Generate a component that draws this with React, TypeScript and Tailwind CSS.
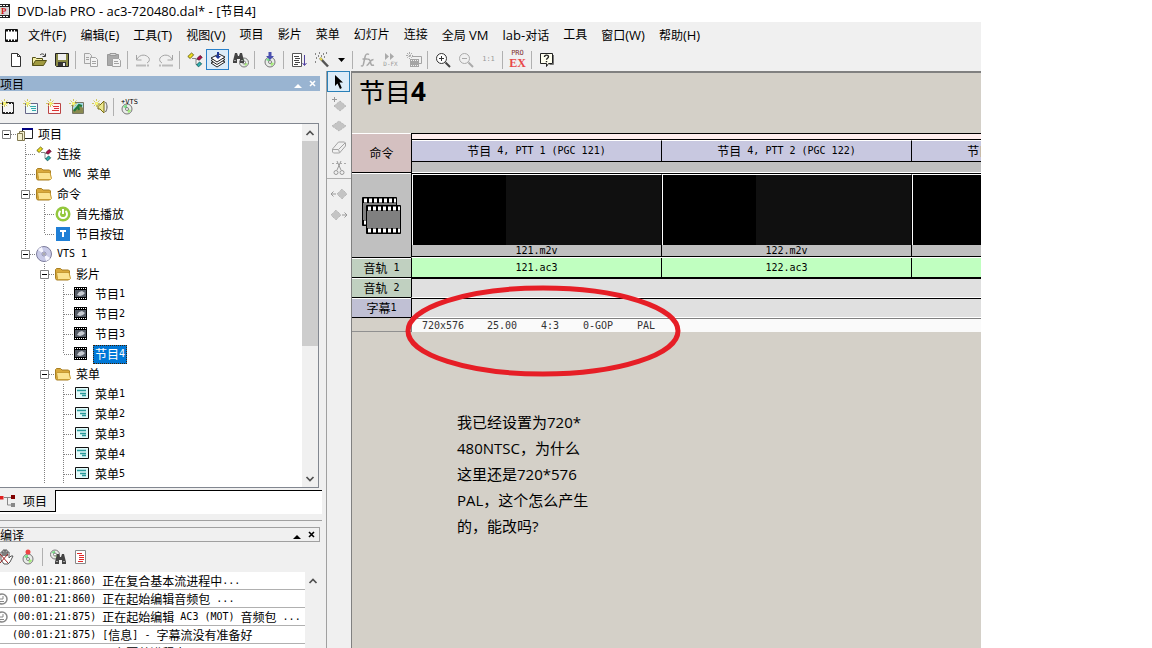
import { Fragment, type ReactNode } from "react";

const splitRuns = (text: string) => text.match(/[\x20-\x7e]+|[^\x20-\x7e]+/g) ?? [];
const isLatin = (run: string) => /^[\x20-\x7e]/.test(run);

/* Half-width latin next to full-width hanzi, like a bitmap song font */
function Song({ text }: { text: string }) {
  return (
    <span className="inline-flex items-center text-xs leading-none whitespace-pre">
      {splitRuns(text).map((run, i) =>
        isLatin(run) ? (
          <span key={i} className="font-['DejaVu_Sans_Mono',monospace] text-[10px] leading-3">
            {run}
          </span>
        ) : (
          <span key={i} className="font-['Noto_Sans_CJK_SC',sans-serif] text-xs leading-3">
            {run}
          </span>
        ),
      )}
    </span>
  );
}

/* Menu and caption text */
function UiText({ text }: { text: string }) {
  return (
    <span className="whitespace-pre">
      {splitRuns(text).map((run, i) => (
        <span key={i} className={isLatin(run) ? "text-[13px] leading-4" : "text-xs leading-4"}>
          {run}
        </span>
      ))}
    </span>
  );
}

function Icon({ children }: { children: ReactNode }) {
  return (
    <svg width="16" height="16" viewBox="0 0 16 16" fill="none" className="shrink-0" aria-hidden="true">
      {children}
    </svg>
  );
}

/* ---------- shared drawing parts ---------- */

function Disc({ cx, cy, r }: { cx: number; cy: number; r: number }) {
  return (
    <g>
      <circle cx={cx} cy={cy} r={r} fill="#e9ece9" stroke="#777" />
      <path d={`M${cx} ${cy}L${cx - r + 1} ${cy - 2}A${r - 1} ${r - 1} 0 0 1 ${cx} ${cy - r + 1}Z`} fill="#7be08a" />
      <path d={`M${cx} ${cy}L${cx + r - 1} ${cy + 1}A${r - 1} ${r - 1} 0 0 1 ${cx + 1} ${cy + r - 1}Z`} fill="#a5ee7a" />
      <circle cx={cx} cy={cy} r="1.5" fill="#fff" stroke="#666" strokeWidth=".8" />
    </g>
  );
}

function Spark() {
  return (
    <g stroke="#cfc860" strokeWidth="1">
      <path d="M4.500 0v9M0 4.500h9M1.500 1.500l6 6M7.500 1.500l-6 6" strokeDasharray="2 1" />
      <rect x="3.500" y="3.500" width="2" height="2" fill="#ffff80" stroke="#f0ec70" />
    </g>
  );
}

function Diamonds({ x = 8, y = 8, w = 7 }: { x?: number; y?: number; w?: number }) {
  return (
    <path
      d={`M${x - w} ${y}L${x} ${y - 5}L${x + w} ${y}L${x} ${y + 5}Z`}
      fill="#c4c4c4"
      stroke="#acacac"
      strokeDasharray="1 1"
    />
  );
}

function Binoculars({ x = 0, y = 0 }: { x?: number; y?: number }) {
  return (
    <g transform={`translate(${x} ${y})`} fill="#444">
      <path d="M2 0h2l1 3h1l1-3h2l2 8v2H7V6H4v4H0V8Z" />
      <path d="M1.500 7.500h1M8.500 7.500h1" stroke="#fff" />
    </g>
  );
}

const Links = () => (
  <Icon>
    <path d="M5 6.500h4v6h2M9 7.500h2" stroke="#888" />
    <path d="M.8 4.500l3.700-3.500 2.200 1.800-3.500 3.700Z" fill="#f0e020" stroke="#555000" strokeWidth=".8" />
    <path d="M10 6.500l3-3 2.200 1.800-3 3Z" fill="#b01048" stroke="#500020" strokeWidth=".8" />
    <path d="M9.500 13l3-3 2.200 1.800-3 3Z" fill="#30b0b0" stroke="#085050" strokeWidth=".8" />
  </Icon>
);

const icons = {
  newFile: (
    <Icon>
      <path d="M3.500 1.500h6l3 3v10h-9Z" fill="#fff" stroke="#333" />
      <path d="M9.500 1.500v3h3" stroke="#333" />
    </Icon>
  ),
  open: (
    <Icon>
      <path d="M1.500 13.500v-8h3l1 1h6v2" fill="#f5f0a8" stroke="#555218" />
      <path d="M1.500 13.500l3-5h11l-3 5Z" fill="#a09a40" stroke="#555218" />
      <path d="M9 3c2-2 4-1 5 1M14.500 1.500v3h-3" stroke="#333" />
    </Icon>
  ),
  save: (
    <Icon>
      <path d="M1.500 1.500h13v13h-12l-1-1Z" fill="#8a8a46" stroke="#222" />
      <path d="M4 2h8v6H4z" fill="#f0f0f0" />
      <path d="M4 10h8v4H4z" fill="#333" />
      <path d="M9 11h2v3H9z" fill="#eee" />
    </Icon>
  ),
  copy: (
    <Icon>
      <path d="M1.500 1.500h5l2 2v8h-7Z" fill="#eee" stroke="#a4a4a4" />
      <path d="M7.500 5.500h5l2 2v7h-7Z" fill="#f4f4f4" stroke="#a4a4a4" />
      <path d="M3 5.500h3M3 7.500h3M9 9.500h4M9 11.500h4" stroke="#a4a4a4" />
    </Icon>
  ),
  paste: (
    <Icon>
      <path d="M1.500 2.500h11v11h-11Z" fill="#aaa" stroke="#999" />
      <path d="M4 1.500h6v2H4Z" fill="#ddd" stroke="#999" />
      <path d="M6.500 6.500h6l2 2v6h-8Z" fill="#f4f4f4" stroke="#a4a4a4" />
      <path d="M8 9.500h4M8 11.500h5" stroke="#a4a4a4" />
    </Icon>
  ),
  undo: (
    <Icon>
      <path d="M1.500 3v5h5M2 7c3-5 9-5 12-1 1 2 0 4-2 5" stroke="#a4a4a4" />
      <path d="M1 13.500h14" stroke="#bbb" strokeWidth="2" strokeDasharray="10 1 2 1" />
    </Icon>
  ),
  redo: (
    <Icon>
      <path d="M14.500 3v5h-5M14 7C11 2 5 2 2 6c-1 2 0 4 2 5" stroke="#a4a4a4" />
      <path d="M1 13.500h14" stroke="#bbb" strokeWidth="2" strokeDasharray="2 1 11 1" />
    </Icon>
  ),
  links: <Links />,
  stack: (
    <Icon>
      <path d="M1 11l6 4 8-5-6-3Z" fill="#fff" stroke="#222" />
      <path d="M1 8.500l6 4 8-5-6-3Z" fill="#fff" stroke="#222" />
      <path d="M1 6l6 4 8-5-6-3Z" fill="#fff" stroke="#222" />
      <path d="M7 0h2v4h2l-3 3-3-3h2Z" fill="#203a9a" />
    </Icon>
  ),
  findDisc: (
    <Icon>
      <Disc cx={11} cy={10.5} r={4.5} />
      <Binoculars x={0} y={1} />
    </Icon>
  ),
  burn: (
    <Icon>
      <Disc cx={8} cy={10} r={5} />
      <path d="M6.500 0h3v4h2.500L8 8 4 4h2.500Z" fill="#4a50b0" />
    </Icon>
  ),
  script: (
    <Icon>
      <path d="M1.500 1.500h9v13h-9Z" fill="#fff" stroke="#555" />
      <path d="M3 4.500h5M4 6.500h5M3 8.500h5M4 10.500h5M3 12.500h4" stroke="#444" />
      <path d="M13.500 3v10M11.500 11l2 2.500 2-2.500" stroke="#5040a0" />
    </Icon>
  ),
  wand: (
    <Icon>
      <path d="M6 6l8 8.500" stroke="#555" strokeWidth="2.500" />
      <path d="M6 6l2 2" stroke="#e8d850" strokeWidth="2" />
      <path d="M1 2h1M5 1h1M9 2h1M2 6h1M4 4h1M10 5h1M1 10h1M7 4h1M12 1h1" stroke="#666" strokeWidth="1.500" />
    </Icon>
  ),
  fx: (
    <Icon>
      <path d="M9 2.500c-2-1.500-3.500 0-4 2.500L3.500 12c-.3 2-1.500 2.500-2.500 1.500M2.500 7h5" stroke="#a8a8a8" strokeWidth="1.500" />
      <path d="M7.500 7.500c2-1 2.500 1 3 3s1 3.500 3.500 2.500M13.500 7.500c-2 0-3 1.500-4 3s-1.500 3-3 3" stroke="#a8a8a8" strokeWidth="1.500" />
    </Icon>
  ),
  dfx: (
    <span aria-hidden="true" className="flex flex-col items-center font-['DejaVu_Sans_Mono',monospace] text-[6px] leading-[7px] text-[#999]">
      <svg width="10" height="7" viewBox="0 0 10 7" fill="#aaa">
        <path d="M0 0l4 3.500L0 7ZM5 0l4 3.500L5 7Z" />
      </svg>
      D-FX
    </span>
  ),
  render: (
    <Icon>
      <path d="M3.500 0v7M0 3.500h7M1 1l5 5M6 1L1 6" stroke="#aaa" strokeDasharray="2 1" />
      <path d="M6 4.500h9.500v7H13" stroke="#a4a4a4" />
      <path d="M4 7h9v8H4z" fill="#a4a4a4" />
      <path d="M5 8.500h8M5 13.500h8" stroke="#eee" strokeDasharray="1 1" />
    </Icon>
  ),
  zoomIn: (
    <Icon>
      <circle cx="6.500" cy="6.500" r="5" fill="#fff" stroke="#333" />
      <path d="M4 6.500h5M6.500 4v5" stroke="#333" />
      <path d="M10.500 10.500l4.500 4.500" stroke="#444" strokeWidth="2" />
    </Icon>
  ),
  zoomOut: (
    <Icon>
      <circle cx="6.500" cy="6.500" r="5" stroke="#aaa" />
      <path d="M4 6.500h5" stroke="#aaa" />
      <path d="M10.500 10.500l4.500 4.500" stroke="#aaa" strokeWidth="2" />
    </Icon>
  ),
  actual: (
    <span aria-hidden="true" className="font-['DejaVu_Sans_Mono',monospace] text-[7px] leading-none text-[#999]">
      1:1
    </span>
  ),
  proEx: (
    <span aria-hidden="true" className="flex flex-col items-center leading-none">
      <span className="font-['DejaVu_Sans_Mono',monospace] text-[7px] leading-[7px] text-[#803030]">PRO</span>
      <span className="font-['Liberation_Serif',serif] text-xs leading-[13px] font-bold text-[#e84848]">EX</span>
    </span>
  ),
  help: (
    <Icon>
      <path d="M1.500 1.500h12v10h-4l-2 3v-3h-6Z" fill="#fffff0" stroke="#222" />
      <path d="M14.500 3v9.500h-4" stroke="#777" />
      <path d="M5.500 5c0-2.500 4-2.500 4-.2 0 1.500-2 1.500-2 3M7.500 9v1.200" stroke="#222" strokeWidth="1.400" />
    </Icon>
  ),
};

type IconName = keyof typeof icons;

interface Tool {
  icon: IconName;
  label: string;
  active?: boolean;
  menu?: boolean;
}

const TOOL_GROUPS: Tool[][] = [
  [
    { icon: "newFile", label: "新建" },
    { icon: "open", label: "打开" },
    { icon: "save", label: "保存" },
  ],
  [
    { icon: "copy", label: "复制" },
    { icon: "paste", label: "粘贴" },
  ],
  [
    { icon: "undo", label: "撤销" },
    { icon: "redo", label: "重做" },
  ],
  [
    { icon: "links", label: "连接" },
    { icon: "stack", label: "图层", active: true },
    { icon: "findDisc", label: "检查" },
  ],
  [{ icon: "burn", label: "编译" }],
  [
    { icon: "script", label: "脚本" },
    { icon: "wand", label: "向导", menu: true },
  ],
  [
    { icon: "fx", label: "效果" },
    { icon: "dfx", label: "D-FX" },
    { icon: "render", label: "渲染" },
  ],
  [
    { icon: "zoomIn", label: "放大" },
    { icon: "zoomOut", label: "缩小" },
    { icon: "actual", label: "1:1" },
  ],
  [{ icon: "proEx", label: "PRO EX" }],
  [{ icon: "help", label: "帮助" }],
];

const MENUS = [
  "文件(F)", "编辑(E)", "工具(T)", "视图(V)", "项目", "影片", "菜单",
  "幻灯片", "连接", "全局 VM", "lab-对话", "工具", "窗口(W)", "帮助(H)",
];

/* ---------- tree ---------- */

const treeIcons = {
  project: (
    <Icon>
      <path d="M5.500 2.500h10v10h-10Z" fill="#fff" stroke="#222" />
      <path d="M5 2h11v2H5z" fill="#000080" />
      <path d="M2.500 5.500h5v9h-5Z" fill="#f4f0d0" stroke="#807850" />
      <path d="M.5 7.500h5v7h-5Z" fill="#f4f0d0" stroke="#807850" />
    </Icon>
  ),
  links: <Links />,
  folder: (
    <Icon>
      <path d="M.5 12.500v-9l1-1h4l1.500 1.500h6.500l1 1v8l-1 1h-12Z" fill="#d9a93c" stroke="#a87f22" />
      <path d="M2.500 12.500l-1-6h12.500l1.500 6-1 1H3.500Z" fill="#fbe391" stroke="#c79b34" />
    </Icon>
  ),
  power: (
    <Icon>
      <circle cx="8" cy="8" r="7.500" fill="#94c83d" />
      <path d="M5.500 5a4 4 0 1 0 5 0M8 3v5" stroke="#fff" strokeWidth="2" />
    </Icon>
  ),
  button: (
    <Icon>
      <path d="M1 1h14v14H1z" fill="#1f7fd6" />
      <path d="M5 5h6M8 5v6" stroke="#fff" strokeWidth="2" />
    </Icon>
  ),
  disc: (
    <Icon>
      <circle cx="8" cy="8" r="7.500" fill="#c9cbe8" stroke="#7c7c9c" />
      <path d="M8 8L2 4a7 7 0 0 1 4-3ZM8 8l6 4a7 7 0 0 1-4 3Z" fill="#f6f6ff" />
      <circle cx="8" cy="8" r="2" fill="#fff" stroke="#8888aa" />
      <circle cx="8" cy="8" r=".8" fill="#444" />
    </Icon>
  ),
  movie: (
    <Icon>
      <path d="M0 1h13v13H0z" fill="#000" />
      <path d="M1 2.500h12M1 12.500h12" stroke="#fff" strokeDasharray="1 1" />
      <path d="M1 4h11v7H1z" fill="#555c66" />
      <path d="M3 9l2-3 3-1 3 2-2 2-3 1Z" fill="#c8ccd2" />
    </Icon>
  ),
  menu: (
    <Icon>
      <path d="M1.500 1.500h13v11h-13Z" fill="#e0fafa" stroke="#111" />
      <path d="M3 4.500h9M6 7.500h6M8 9.500h4" stroke="#2a9a9a" strokeWidth="1.500" />
    </Icon>
  ),
};

interface TreeRow {
  label: string;
  icon: keyof typeof treeIcons;
  guides: boolean[]; // one entry per ancestor column, true = line runs through
  open?: boolean;
  last?: boolean;
  selected?: boolean;
}

const TREE: TreeRow[] = [
  { label: "项目", icon: "project", guides: [], open: true, last: true },
  { label: "连接", icon: "links", guides: [false] },
  { label: " VMG 菜单", icon: "folder", guides: [false] },
  { label: "命令", icon: "folder", guides: [false], open: true },
  { label: "首先播放", icon: "power", guides: [false, true] },
  { label: "节目按钮", icon: "button", guides: [false, true], last: true },
  { label: "VTS 1", icon: "disc", guides: [false], open: true, last: true },
  { label: "影片", icon: "folder", guides: [false, false], open: true },
  { label: "节目1", icon: "movie", guides: [false, false, true] },
  { label: "节目2", icon: "movie", guides: [false, false, true] },
  { label: "节目3", icon: "movie", guides: [false, false, true] },
  { label: "节目4", icon: "movie", guides: [false, false, true], last: true, selected: true },
  { label: "菜单", icon: "folder", guides: [false, false], open: true },
  { label: "菜单1", icon: "menu", guides: [false, false, true] },
  { label: "菜单2", icon: "menu", guides: [false, false, true] },
  { label: "菜单3", icon: "menu", guides: [false, false, true] },
  { label: "菜单4", icon: "menu", guides: [false, false, true] },
  { label: "菜单5", icon: "menu", guides: [false, false, true] },
];

function TreeItem({ row }: { row: TreeRow }) {
  const root = row.guides.length === 0;
  return (
    <li className="flex h-5 items-center">
      {row.guides.map((line, i) => (
        <svg key={i} width="19" height="20" className="shrink-0" aria-hidden="true">
          {line && <path d="M6.500 0v20" stroke="#808080" strokeDasharray="1 1" />}
        </svg>
      ))}
      <svg width="17" height="20" className="shrink-0" fill="none" aria-hidden="true">
        {!root && <path d={row.last ? "M6.500 0v10" : "M6.500 0v20"} stroke="#808080" strokeDasharray="1 1" />}
        <path d="M7 10.500h10" stroke="#808080" strokeDasharray="1 1" />
        {row.open && (
          <>
            <path d="M2.500 6.500h8v8h-8Z" fill="#fff" stroke="#808080" />
            <path d="M4 10.500h5" stroke="#000" />
          </>
        )}
      </svg>
      <span className="flex w-[19px] shrink-0">{treeIcons[row.icon]}</span>
      <span
        className={
          row.selected
            ? "flex h-[19px] items-center border border-dotted border-[#402000] bg-[#0078d7] px-px text-white"
            : "flex h-[19px] items-center px-[2px]"
        }
      >
        <Song text={row.label} />
      </span>
    </li>
  );
}

/* ---------- small chrome ---------- */

function Arrow({ up = false }: { up?: boolean }) {
  return (
    <svg width="10" height="6" viewBox="0 0 10 6" fill="none" aria-hidden="true">
      <path d={up ? "M1.500 5L5 1.500 8.500 5" : "M1.500 1L5 4.500 8.500 1"} stroke="#505050" strokeWidth="1.700" />
    </svg>
  );
}

function PanelButtons() {
  return (
    <div className="flex items-center gap-1 pr-1">
      <button type="button" aria-label="折叠" className="flex w-3 justify-center">
        <svg width="8" height="4" viewBox="0 0 8 4" fill="currentColor" className="mt-1">
          <path d="M0 4l4-4 4 4Z" />
        </svg>
      </button>
      <button type="button" aria-label="关闭" className="flex w-2 justify-center">
        <svg width="7" height="7" viewBox="0 0 7 7" stroke="currentColor" strokeWidth="1.600">
          <path d="M1 1l5 5M6 1L1 6" />
        </svg>
      </button>
    </div>
  );
}

function Separator() {
  return <div className="mr-[3px] ml-[2px] h-[18px] w-px shrink-0 bg-[#b0b0b0]" />;
}

const PROJECT_TOOLS = [
  {
    label: "添加影片",
    art: (
      <Icon>
        <path d="M2.500 3.500h11v11h-11Z" fill="#f4f4f4" stroke="#222" />
        <path d="M3 4.500h11M3 13.500h11" stroke="#222" strokeDasharray="2 1" />
        <Spark />
      </Icon>
    ),
  },
  {
    label: "添加菜单",
    art: (
      <Icon>
        <path d="M2.500 4.500h12v10h-12Z" fill="#f0fafa" stroke="#668" />
        <path d="M7 7.500h6M8 9.500h5M9 11.500h4" stroke="#3aa" />
        <Spark />
      </Icon>
    ),
  },
  {
    label: "添加字幕菜单",
    art: (
      <Icon>
        <path d="M2.500 4.500h12v10h-12Z" fill="#fff4f4" stroke="#b44" />
        <path d="M7 7.500h6M8 9.500h5M6 11.500h7" stroke="#d33" />
        <Spark />
      </Icon>
    ),
  },
  {
    label: "添加幻灯片",
    art: (
      <Icon>
        <path d="M3.500 3.500h11v11h-11Z" fill="#a8dce8" stroke="#776" />
        <path d="M4 14v-3l4-3 3-2 3 3v5Z" fill="#8a8a50" />
        <path d="M5 12l5-6 3 1M9 7l1 4" stroke="#1f7a3a" strokeWidth="2" />
        <Spark />
      </Icon>
    ),
  },
  {
    label: "添加音频",
    art: (
      <Icon>
        <path d="M6 6h2l4-4v12l-4-4H6Z" fill="#ece890" stroke="#776a10" />
        <path d="M13.500 3c2 3 2 7 0 10" stroke="#555" />
        <Spark />
      </Icon>
    ),
  },
];

const TIMELINE_TOOLS: { label: string; art: ReactNode; split?: boolean }[] = [
  { label: "添加章节", art: <><path d="M3.500 0v5M1 2.500h5" stroke="#999" /><Diamonds x={9} y={9} w={6} /></> },
  { label: "章节", art: <Diamonds /> },
  { label: "擦除", art: <path d="M1.500 10l6-7h6l1 1v3l-6 7h-6l-1-1ZM1.500 10.500h6l1 3M8 10l6-6" stroke="#a4a4a4" /> },
  {
    label: "剪切",
    art: (
      <>
        <path d="M1 3.500h14" stroke="#aaa" strokeDasharray="2 2" />
        <path d="M6 1l4 9M10 1L6 10" stroke="#999" />
        <circle cx="5" cy="12.500" r="2" stroke="#999" />
        <circle cx="11" cy="12.500" r="2" stroke="#999" />
      </>
    ),
    split: true,
  },
  { label: "上一章节", art: <><path d="M0 8h5M2.500 5.500L0 8l2.500 2.500" stroke="#999" /><Diamonds x={11} w={5} /></> },
  { label: "下一章节", art: <><path d="M16 8h-5M13.500 5.500L16 8l-2.500 2.500" stroke="#999" /><Diamonds x={5} w={5} /></> },
];

const LOG = [
  { text: "(00:01:21:860) 正在复合基本流进程中...", clock: false },
  { text: "(00:01:21:860) 正在起始编辑音频包 ...", clock: true },
  { text: "(00:01:21:875) 正在起始编辑 AC3 (MOT) 音频包 ...", clock: true },
  { text: "(00:01:21:875) [信息] - 字幕流没有准备好", clock: false },
  { text: "(00:01:21:875) 正在覆盖进程中...", clock: false },
];

const CLIPS = [
  { title: "节目 4, PTT 1 (PGC 121)", video: "121.m2v", audio: "121.ac3" },
  { title: "节目 4, PTT 2 (PGC 122)", video: "122.m2v", audio: "122.ac3" },
  { title: "节目 4, PTT 3 (PGC 123)", video: "123.m2v", audio: "123.ac3" },
];

const NOTE = ["我已经设置为720*", "480NTSC，为什么", "这里还是720*576", "PAL，这个怎么产生", "的，能改吗?"];

/* ---------- panels ---------- */

function ProjectPanel() {
  return (
    <section className="flex min-h-0 flex-1 flex-col">
      <div className="mt-[5px] mr-[6px] flex h-[15px] shrink-0 items-center justify-between bg-[#99b4d1]">
        <h2 className="flex"><Song text="项目" /></h2>
        <div className="text-white"><PanelButtons /></div>
      </div>
      <div className="flex h-8 shrink-0 items-center">
        <div className="flex gap-[7px] pr-[3px]">
          {PROJECT_TOOLS.map((t) => (
            <button key={t.label} type="button" aria-label={t.label} className="flex">
              {t.art}
            </button>
          ))}
        </div>
        <Separator />
        <button type="button" aria-label="+VTS" className="ml-1 flex items-start">
          <Icon>
            <Disc cx={6} cy={10} r={5} />
          </Icon>
          <span aria-hidden="true" className="-ml-4 font-['DejaVu_Sans_Mono',monospace] text-[7px] leading-none">+VTS</span>
        </button>
      </div>
      <div className="mr-[7px] flex min-h-0 flex-1 overflow-hidden border-y border-r border-[#828790] bg-white">
        <ul className="min-w-0 flex-1">
          {TREE.map((row) => (
            <TreeItem key={row.label + row.icon} row={row} />
          ))}
        </ul>
        <div className="flex w-4 flex-col bg-[#f0f0f0]">
          <button type="button" aria-label="向上" className="flex h-[17px] items-center justify-center"><Arrow up /></button>
          <div className="h-[205px] bg-[#cdcdcd]" />
          <button type="button" aria-label="向下" className="mt-auto flex h-[17px] items-center justify-center"><Arrow /></button>
        </div>
      </div>
      <div className="mt-[2px] mr-1 flex h-6 shrink-0 items-start bg-white">
        <button type="button" className="flex h-[22px] w-14 items-center border-r border-b border-black bg-[#f0f0f0]">
          <Icon>
            <path d="M0 3h3.500v3.500H0z" fill="#e02020" />
            <path d="M11 2h4v4h-4z" fill="#800000" />
            <path d="M4 4.500h7M7.500 5v7H11" stroke="#888" />
            <path d="M11 10h4v4h-4z" fill="#888" />
          </Icon>
          <span className="ml-[7px] flex"><Song text="项目" /></span>
        </button>
        <div className="flex-1 border-t border-black" />
      </div>
    </section>
  );
}

function CompilePanel() {
  return (
    <section className="mt-[6px] shrink-0">
      <div className="mr-1 h-px bg-[#a0a0a0]" />
      <div className="mt-[6px] mr-[6px] flex h-[15px] items-center justify-between border-y border-r border-[#a0a0a0]">
        <h2 className="flex"><Song text="编译" /></h2>
        <PanelButtons />
      </div>
      <div className="flex h-[30px] items-center">
        <button type="button" aria-label="停止" className="flex w-[20px]">
          <Icon>
            <path d="M1 6V3h2v4V1h2v6V1h2v6V3h2v6l2-2h2l-3 6-2 2H4L1 11Z" fill="#fff" stroke="#555" />
            <path d="M0 5l8 9M8 5l-8 9" stroke="#a02020" />
          </Icon>
        </button>
        <button type="button" aria-label="刻录" className="flex">
          <Icon>
            <Disc cx={8} cy={10} r={5} />
            <circle cx="8" cy="3" r="2.500" fill="#ee4444" />
          </Icon>
        </button>
        <div className="ml-1"><Separator /></div>
        <button type="button" aria-label="查找" className="flex w-[23px] justify-center">
          <Icon>
            <Disc cx={5} cy={5.5} r={4.5} />
            <Binoculars x={5} y={5} />
          </Icon>
        </button>
        <button type="button" aria-label="日志" className="flex w-[23px] justify-center">
          <Icon>
            <path d="M2.500 1.500h10v13h-10Z" fill="#fff" stroke="#888" />
            <path d="M4 4.500h5M6 6.500h5M6 8.500h5M6 10.500h5M5 12.500h5" stroke="#e02828" />
          </Icon>
        </button>
      </div>
      <div className="mr-[5px] flex h-[76px] overflow-hidden">
        <ul className="flex-1 bg-white">
          {LOG.map((line, i) => (
            <li key={i} className="flex h-[18px] items-center border-b border-[#b0b0b0]">
              <span className="flex w-3 shrink-0">
                {line.clock && (
                  <svg width="8" height="12" viewBox="0 0 8 12" fill="none" stroke="#888" aria-hidden="true">
                    <circle cx="2" cy="6" r="5" strokeWidth="1.500" />
                    <path d="M0 6h3V3M0 8.500h4" />
                  </svg>
                )}
              </span>
              <Song text={line.text} />
            </li>
          ))}
        </ul>
        <button type="button" aria-label="向上" className="flex h-[18px] w-4 items-center justify-center"><Arrow up /></button>
      </div>
    </section>
  );
}

function ToolStrip() {
  return (
    <div className="flex w-[25px] shrink-0 flex-col border-l border-[#a0a0a0]">
      <button type="button" aria-label="选择" className="mb-[2px] flex h-[21px] w-[23px] shrink-0 items-center justify-center border border-[#2a80b8] bg-[#dcecf8]">
        <Icon>
          <path d="M4 1v11l2.500-2.500L9 15l1.800-1L8.500 8.500H12Z" fill="#000" />
        </Icon>
      </button>
      {TIMELINE_TOOLS.map((t) => (
        <Fragment key={t.label}>
          <button type="button" aria-label={t.label} className="flex h-[21px] items-center justify-center">
            <Icon>{t.art}</Icon>
          </button>
          {t.split && <div className="mb-1 h-px bg-[#b0b0b0]" />}
        </Fragment>
      ))}
    </div>
  );
}

function TrackHead({ className, children }: { className: string; children: ReactNode }) {
  return (
    <div className={`flex w-[59px] shrink-0 items-center justify-center border-t border-b border-t-white border-b-black ${className}`}>
      {children}
    </div>
  );
}

function FilmStack() {
  return (
    <svg width="40" height="38" viewBox="0 0 40 38" fill="none" aria-hidden="true">
      <path d="M.5.5h34v28H.5Z" fill="#808080" stroke="#000" />
      <path d="M1 3.500h34M1 25.500h34" stroke="#000" strokeWidth="5" />
      <path d="M2 3.500h32M2 25.500h32" stroke="#fff" strokeWidth="4" strokeDasharray="3 2" />
      <path d="M4.500 8.500h34v28h-34Z" fill="#808080" stroke="#000" />
      <path d="M5 11.500h34M5 33.500h34" stroke="#000" strokeWidth="5" />
      <path d="M6 11.500h32M6 33.500h32" stroke="#fff" strokeWidth="4" strokeDasharray="3 2" />
    </svg>
  );
}

function Timeline() {
  return (
    <div className="mt-[27px]">
      <div className="flex h-10">
        <TrackHead className="bg-[#d4c0c0]"><Song text="命令" /></TrackHead>
        <div className="flex min-w-0 flex-1 flex-col overflow-hidden border-t border-l border-black">
          <div className="h-[5px] shrink-0 bg-[#ffeeee]" />
          <div className="flex h-[23px] shrink-0 border-y border-black">
            {CLIPS.map((c) => (
              <div key={c.title} className="flex w-[250px] shrink-0 items-center justify-center border-t border-r border-t-white border-r-black bg-[#c8c8e0]">
                <Song text={c.title} />
              </div>
            ))}
          </div>
          <div className="flex-1 border-b border-white bg-[#c0c0c0]" />
        </div>
      </div>

      <div className="flex h-[85px]">
        <TrackHead className="bg-[#c0c0c0]"><FilmStack /></TrackHead>
        <div className="flex min-w-0 flex-1 overflow-hidden border-y border-l border-t-black border-b-white border-l-black">
          {CLIPS.map((c) => (
            <div key={c.video} className="flex w-[250px] shrink-0 flex-col border-t border-r border-b border-t-white border-r-black border-b-black">
              <div className="flex h-[70px] shrink-0 border-l border-white bg-[#101010]">
                <div className="w-[93px] bg-black" />
              </div>
              <div className="flex h-[11px] items-center justify-center bg-[#c0c0c0]">
                <Song text={c.video} />
              </div>
            </div>
          ))}
        </div>
      </div>

      <div className="flex h-5">
        <TrackHead className="bg-[#c0d0c0]"><Song text="音轨 1" /></TrackHead>
        <div className="flex min-w-0 flex-1 overflow-hidden border-b border-l border-black">
          {CLIPS.map((c) => (
            <div key={c.audio} className="flex w-[250px] shrink-0 items-center justify-center border-r border-black bg-[#c0ffc0]">
              <Song text={c.audio} />
            </div>
          ))}
        </div>
      </div>

      <div className="flex h-5">
        <TrackHead className="bg-[#c0d0c0]"><Song text="音轨 2" /></TrackHead>
        <div className="flex-1 border-y border-l border-t-black border-b-white border-l-black bg-[#e0e0e0]" />
      </div>
      <div className="flex h-5">
        <TrackHead className="bg-[#c0c0d4]"><Song text="字幕1" /></TrackHead>
        <div className="flex-1 border-y border-l border-t-black border-b-white border-l-black bg-[#e0e0e0]" />
      </div>

      <div className="flex h-[14px]">
        <div className="w-[59px] border-b border-[#909090]" />
        <div className="flex flex-1 items-center border-t border-l border-[#808080] bg-[#fafafa] pl-[10px] text-[#333]">
          <span className="flex w-[65px]"><Song text="720x576" /></span>
          <span className="flex w-[54px]"><Song text="25.00" /></span>
          <span className="flex w-[42px]"><Song text="4:3" /></span>
          <span className="flex w-[54px]"><Song text="0-GOP" /></span>
          <Song text="PAL" />
        </div>
      </div>
    </div>
  );
}

function Editor() {
  return (
    <main className="relative min-w-0 flex-1 overflow-hidden border-l border-[#808080] bg-[#d4d0c8]">
      <h1 className="flex pt-[3px] pl-[7px] font-['Noto_Sans_CJK_SC',sans-serif] text-[26px] leading-[30px] font-normal">
        节目<span className="font-['Open_Sans',sans-serif] font-bold">4</span>
      </h1>
      <Timeline />
      {/* Hand-drawn marker over the format line */}
      <svg width="276" height="94" viewBox="0 0 276 94" fill="none" className="absolute top-[211px] left-[53px]" aria-hidden="true">
        <ellipse cx="138" cy="47" rx="135" ry="43" stroke="#e61e26" strokeWidth="5" />
      </svg>
      <p className="mt-[77px] ml-[105px] font-['Open_Sans','Noto_Sans_CJK_SC',sans-serif] text-[15px] leading-[26px]">
        {NOTE.map((line) => (
          <Fragment key={line}>
            {line}
            <br />
          </Fragment>
        ))}
      </p>
    </main>
  );
}

export default function App() {
  return (
    <div className="min-h-screen bg-white font-['Open_Sans','Noto_Sans_CJK_SC',sans-serif] text-black">
      <div className="mr-[171px] flex h-screen flex-col overflow-hidden">
        <header className="flex h-[22px] shrink-0 items-center gap-[6px] text-xs">
          <svg width="11" height="14" viewBox="0 0 11 14" aria-hidden="true">
            <path d="M0 0h10v14H0z" fill="#222" />
            <path d="M0 1.500h9M0 12.500h9" stroke="#fff" strokeDasharray="2 1" />
            <path d="M0 3h9v8H0z" fill="#d8d8d8" />
            <text x="1" y="10" fontSize="9" fontWeight="bold" fontFamily="Liberation Serif, serif" fill="#d01818">P</text>
          </svg>
          <UiText text="DVD-lab PRO - ac3-720480.dal* - [节目4]" />
        </header>

        <div className="flex min-h-0 flex-1 flex-col bg-[#f0f0f0]">
          <nav className="flex h-[26px] shrink-0 items-center gap-[14px] pl-[5px] text-xs whitespace-nowrap">
            <svg width="13" height="13" viewBox="0 0 13 13" fill="none" className="-mr-1" aria-hidden="true">
              <path d="M.5.5h12v12H.5Z" fill="#fff" stroke="#111" />
              <path d="M1 1.500h11M1 11.500h11" stroke="#111" strokeWidth="2" strokeDasharray="2 1" />
            </svg>
            {MENUS.map((m, i) => (
              <button key={i} type="button"><UiText text={m} /></button>
            ))}
          </nav>

          <div className="flex h-[23px] shrink-0 items-center pl-1">
            {TOOL_GROUPS.map((group, g) => (
              <Fragment key={g}>
                {g > 0 && <Separator />}
                {group.map((t) => (
                  <button
                    key={t.icon}
                    type="button"
                    aria-label={t.label}
                    className={
                      t.active
                        ? "flex h-[21px] w-[23px] shrink-0 items-center justify-center border border-[#2a80c8] bg-[#dcecf8]"
                        : t.menu
                          ? "flex h-[21px] w-10 shrink-0 items-center gap-2 pl-1"
                          : "flex h-[21px] w-[23px] shrink-0 items-center justify-center"
                    }
                  >
                    {icons[t.icon]}
                    {t.menu && (
                      <svg width="7" height="4" viewBox="0 0 7 4" aria-hidden="true">
                        <path d="M0 0h7L3.500 4Z" />
                      </svg>
                    )}
                  </button>
                ))}
              </Fragment>
            ))}
          </div>

          <div className="flex min-h-0 flex-1">
            <aside className="flex w-[326px] shrink-0 flex-col">
              <ProjectPanel />
              <CompilePanel />
            </aside>
            <ToolStrip />
            <div className="flex min-w-0 flex-1 border-t-2 border-[#808080]">
              <Editor />
            </div>
          </div>
        </div>
      </div>
    </div>
  );
}
